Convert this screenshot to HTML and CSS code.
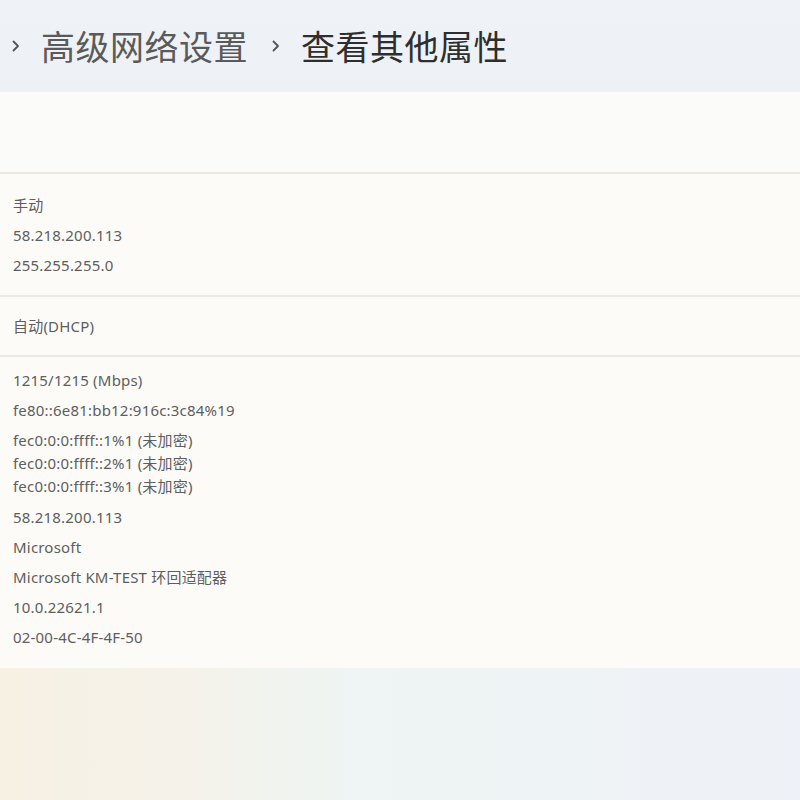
FILE: index.html
```html
<!DOCTYPE html>
<html lang="zh-CN">
<head>
    <meta charset="UTF-8">
    <meta name="viewport" content="width=device-width, initial-scale=1.0">
    <title>查看其他属性</title>
    <link rel="stylesheet" href="styles.css">
</head>
<body>
    <header class="breadcrumb">
        <svg class="chevron" viewBox="0 0 9 12" width="9" height="12"><path d="M2.5 1.5 L7 6 L2.5 10.5" /></svg>
        <span class="crumb">高级网络设置</span>
        <svg class="chevron chevron-mid" viewBox="0 0 9 12" width="9" height="12"><path d="M2.5 1.5 L7 6 L2.5 10.5" /></svg>
        <span class="crumb current">查看其他属性</span>
    </header>

    <main class="props">
        <section class="card card-empty"></section>

        <section class="card card-ip">
            <div class="row">手动</div>
            <div class="row">58.218.200.113</div>
            <div class="row">255.255.255.0</div>
        </section>

        <section class="card card-dns">
            <div class="row">自动(DHCP)</div>
        </section>

        <section class="card card-info">
            <div class="row">1215/1215 (Mbps)</div>
            <div class="row">fe80::6e81:bb12:916c:3c84%19</div>
            <div class="row-group">
                <div>fec0:0:0:ffff::1%1 (未加密)</div>
                <div>fec0:0:0:ffff::2%1 (未加密)</div>
                <div>fec0:0:0:ffff::3%1 (未加密)</div>
            </div>
            <div class="row">58.218.200.113</div>
            <div class="row">Microsoft</div>
            <div class="row">Microsoft KM-TEST 环回适配器</div>
            <div class="row">10.0.22621.1</div>
            <div class="row">02-00-4C-4F-4F-50</div>
        </section>
    </main>
</body>
</html>
```

FILE: styles.css
```css
* {
    margin: 0;
    padding: 0;
    box-sizing: border-box;
}

body {
    font-family: "Noto Sans", "Noto Sans CJK SC", sans-serif;
    min-height: 800px;
    background: linear-gradient(90deg, #f7f1e3 0%, #f4f2ea 25%, #eef5f4 45%, #eef1f7 100%);
    color: #5e5e5e;
}

/* header with the breadcrumb */
.breadcrumb {
    height: 92px;
    display: flex;
    align-items: center;
    padding-left: 11px;
    background: linear-gradient(180deg, #eff2f6 0%, #edf0f4 100%);
    font-family: "Noto Sans CJK SC", sans-serif;
    font-size: 34px;
    line-height: 1;
}

.chevron {
    fill: none;
    stroke: #555;
    stroke-width: 1.8;
    stroke-linecap: round;
    stroke-linejoin: round;
    margin-right: 21px;
}

.chevron-mid {
    margin-left: 23px;
    margin-right: 21px;
}

.crumb {
    color: #5a5a5a;
    letter-spacing: 0.5px;
}

.crumb.current {
    color: #2e2e2e;
}

/* property cards */
.props {
    display: flex;
    flex-direction: column;
    gap: 2px;
    background-color: #ebe9e5;
}

.card {
    background-color: #fcfbf8;
    padding: 0 13px;
    font-size: 15px;
    letter-spacing: 0.2px;
}

.card-empty {
    height: 80px;
    background-color: #fbfbfa;
}

.card-ip {
    padding-top: 16px;
    padding-bottom: 15px;
}

.card-dns {
    padding-top: 14px;
    padding-bottom: 14px;
}

.card-info {
    padding-top: 8px;
    padding-bottom: 16px;
}

.row {
    line-height: 30px;
}

.row-group {
    padding: 4px 0;
    line-height: 23px;
}
```
